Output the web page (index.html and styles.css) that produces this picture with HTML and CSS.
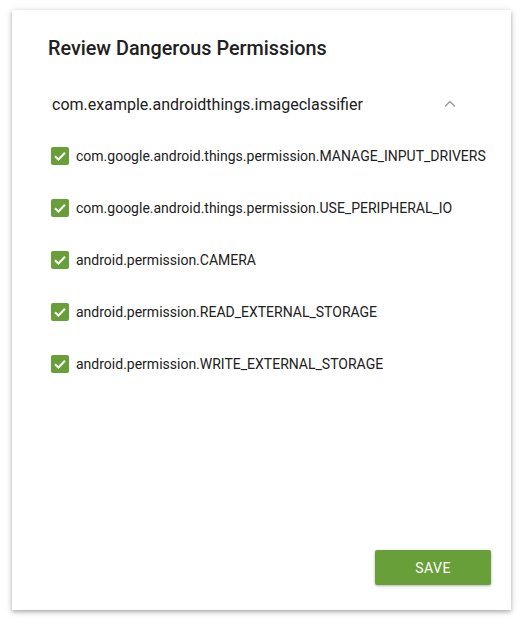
FILE: index.html
```html
<!DOCTYPE html>
<html>
<head>
<meta charset="utf-8">
<link rel="stylesheet" href="styles.css">
</head>
<body>
<div class="card">
  <h1 class="title">Review Dangerous Permissions</h1>
  <div class="pkg">
    <span class="pkg-name">com.example.androidthings.imageclassifier</span>
    <svg class="chev" width="12" height="8" viewBox="0 0 12 8"><path d="M1 6.5 L6 1.5 L11 6.5" fill="none" stroke="#9e9e9e" stroke-width="1.5"/></svg>
  </div>
  <ul class="perms">
    <li class="perm"><span class="cb"><svg width="18" height="18" viewBox="0 0 18 18"><path d="M4 9.2 L7.4 12.5 L14 5.8" fill="none" stroke="#fff" stroke-width="2"/></svg></span><span>com.google.android.things.permission.MANAGE_INPUT_DRIVERS</span></li>
    <li class="perm"><span class="cb"><svg width="18" height="18" viewBox="0 0 18 18"><path d="M4 9.2 L7.4 12.5 L14 5.8" fill="none" stroke="#fff" stroke-width="2"/></svg></span><span>com.google.android.things.permission.USE_PERIPHERAL_IO</span></li>
    <li class="perm"><span class="cb"><svg width="18" height="18" viewBox="0 0 18 18"><path d="M4 9.2 L7.4 12.5 L14 5.8" fill="none" stroke="#fff" stroke-width="2"/></svg></span><span>android.permission.CAMERA</span></li>
    <li class="perm"><span class="cb"><svg width="18" height="18" viewBox="0 0 18 18"><path d="M4 9.2 L7.4 12.5 L14 5.8" fill="none" stroke="#fff" stroke-width="2"/></svg></span><span>android.permission.READ_EXTERNAL_STORAGE</span></li>
    <li class="perm"><span class="cb"><svg width="18" height="18" viewBox="0 0 18 18"><path d="M4 9.2 L7.4 12.5 L14 5.8" fill="none" stroke="#fff" stroke-width="2"/></svg></span><span>android.permission.WRITE_EXTERNAL_STORAGE</span></li>
  </ul>
  <div class="actions"><button class="save">SAVE</button></div>
</div>
</body>
</html>
```
FILE: styles.css
```css
html, body { margin: 0; padding: 0; background: #fff; }
body { padding: 10px 12px 14px; font-family: Roboto, "Liberation Sans", sans-serif; color: #212121; }
.card {
  height: 600px;
  box-sizing: border-box;
  background: #fff;
  box-shadow: 0 2px 4px rgba(0,0,0,0.25), 0 1px 8px rgba(0,0,0,0.12);
  display: flex;
  flex-direction: column;
  padding: 0 20px 25px 36px;
}
.title {
  margin: 27px 0 0 0;
  font-size: 19.8px;
  font-weight: 500;
  line-height: 24px;
}
.pkg {
  display: flex;
  align-items: center;
  margin-top: 31px;
  height: 24px;
  padding-left: 4px;
  padding-right: 35px;
}
.pkg-name { font-size: 16px; flex: 1; color: #212121; }
.chev { display: block; }
.perms { list-style: none; margin: 28px 0 0 0; padding: 0 0 0 3px; display: flex; flex-direction: column; gap: 28px; }
.perm { display: flex; align-items: center; height: 24px; font-size: 14px; color: #212121; gap: 7px; }
.cb { width: 18px; height: 18px; background: #689f38; border-radius: 2px; display: block; }
.cb svg { display: block; }
.actions { margin-top: auto; display: flex; justify-content: flex-end; }
.save {
  width: 116px; height: 35px;
  background: #689f38; color: #fff; border: none; border-radius: 2px;
  font-family: Roboto, "Liberation Sans", sans-serif; font-size: 14px; letter-spacing: 0.5px;
  box-shadow: 0 1px 3px rgba(0,0,0,0.3);
}
```
